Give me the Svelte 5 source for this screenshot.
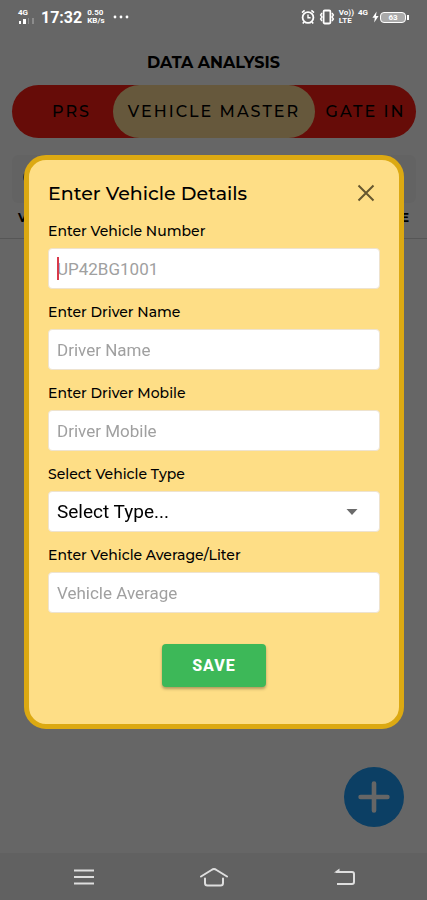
<script lang="ts">
  import { onMount } from 'svelte';

  let activeTab: string = 'VEHICLE MASTER';
  let open: boolean = true;
  let search: string = '';
  let numberInput: HTMLInputElement;

  let vehicle = {
    number: '',
    driver: '',
    mobile: '',
    type: '',
    average: '',
  };

  const tabs = [
    { name: 'PRS', kind: 'first' },
    { name: 'VEHICLE MASTER', kind: 'middle' },
    { name: 'GATE IN', kind: 'last' },
  ];

  onMount(() => {
    numberInput?.focus();
  });

  function save(event: Event): void {
    event.preventDefault();
    open = false;
  }
</script>

<div class="screen">
  <header class="status-bar">
    <div class="network">
      <span class="tiny">4G</span>
      <svg width="16" height="7" viewBox="0 0 16 7" fill="#fff" aria-hidden="true">
        <rect x="1" y="3" width="2" height="3" />
        <rect x="5" y="1" width="3" height="5" />
        <rect x="10" y="0" width="1" height="6" opacity="0.25" />
        <rect x="14" y="0" width="2" height="6" opacity="0.25" />
      </svg>
    </div>
    <span class="clock">17:32</span>
    <span class="tiny">0.50<br />KB/s</span>
    <svg class="more" width="16" height="4" viewBox="0 0 16 4" fill="#fff" aria-hidden="true">
      <circle cx="2" cy="2" r="1.4" />
      <circle cx="8" cy="2" r="1.4" />
      <circle cx="14" cy="2" r="1.4" />
    </svg>
    <div class="status-right">
      <svg width="14" height="16" viewBox="0 0 14 16" fill="none" stroke="#fff" aria-hidden="true">
        <circle cx="7" cy="8.5" r="5.4" stroke-width="1.8" />
        <path d="M7 5.5v3.2h2.6" stroke-width="1.4" />
        <path d="M1 3.6 3.6 1.4M13 3.6 10.4 1.4M3 13l-1.2 1.6M11 13l1.2 1.6" stroke-width="1.6" />
      </svg>
      <svg width="16" height="16" viewBox="0 0 16 16" fill="none" stroke="#fff" aria-hidden="true">
        <rect x="4.6" y="1.5" width="6.8" height="13" rx="1.2" stroke-width="1.8" />
        <path d="M3 4 1.6 6 3 8 1.6 10 3 12M13 4l1.4 2L13 8l1.4 2L13 12" stroke-width="1.4" />
      </svg>
      <span class="tiny">Vo))<br />LTE</span>
      <span class="tiny data">4G</span>
      <div class="power">
        <svg width="7" height="12" viewBox="0 0 7 12" fill="#fff" aria-hidden="true">
          <path d="M4.6 0.5 0.4 6.8h2.4L2.2 11.5 6.6 5H4z" />
        </svg>
        <span class="battery">63</span>
        <i class="battery-tip"></i>
      </div>
    </div>
  </header>

  <main>
    <h1>DATA ANALYSIS</h1>
    <nav class="tabs">
      {#each tabs as tab}
        <button
          type="button"
          class="tab {tab.kind}"
          class:active={activeTab === tab.name}
          on:click={() => (activeTab = tab.name)}
        >
          {tab.name}
        </button>
      {/each}
    </nav>
    <div class="search">
      <svg width="20" height="20" viewBox="0 0 20 20" fill="none" stroke="#777" stroke-width="2" aria-hidden="true">
        <circle cx="8" cy="8" r="6" />
        <path d="m13 13 5 5" />
      </svg>
      <input type="search" aria-label="Search" bind:value={search} />
    </div>
    <table>
      <thead>
        <tr>
          <th>V.No</th>
          <th>TYPE</th>
        </tr>
      </thead>
    </table>
    <button type="button" class="add" aria-label="Add vehicle" on:click={() => (open = true)}>
      <svg width="32" height="32" viewBox="0 0 32 32" stroke="#fff" stroke-width="4.6" stroke-linecap="round">
        <path d="M16 2.6v26.8M2.6 16h26.8" />
      </svg>
    </button>
  </main>

  {#if open}
    <div class="backdrop">
      <form class="dialog" on:submit={save}>
        <div class="dialog-head">
          <h2>Enter Vehicle Details</h2>
          <button type="button" class="close" aria-label="Close" on:click={() => (open = false)}>
            <svg width="18" height="18" viewBox="0 0 18 18" stroke="#66572f" stroke-width="2">
              <path d="m1.5 1.5 15 15m0-15-15 15" />
            </svg>
          </button>
        </div>

        <div class="field">
          <label for="number">Enter Vehicle Number</label>
          <input
            id="number"
            type="text"
            placeholder="UP42BG1001"
            bind:this={numberInput}
            bind:value={vehicle.number}
          />
          {#if !vehicle.number}
            <i class="caret"></i>
          {/if}
        </div>
        <div class="field">
          <label for="driver">Enter Driver Name</label>
          <input id="driver" type="text" placeholder="Driver Name" bind:value={vehicle.driver} />
        </div>
        <div class="field">
          <label for="mobile">Enter Driver Mobile</label>
          <input id="mobile" type="tel" placeholder="Driver Mobile" bind:value={vehicle.mobile} />
        </div>
        <div class="field">
          <label for="type">Select Vehicle Type</label>
          <select id="type" bind:value={vehicle.type}>
            <option value="">Select Type...</option>
          </select>
          <svg class="arrow" width="12" height="6" viewBox="0 0 12 6" fill="#6b6b6b" aria-hidden="true">
            <path d="M0.5 0h11L6 6z" />
          </svg>
        </div>
        <div class="field">
          <label for="average">Enter Vehicle Average/Liter</label>
          <input id="average" type="text" placeholder="Vehicle Average" bind:value={vehicle.average} />
        </div>

        <button type="submit" class="save">SAVE</button>
      </form>
    </div>
  {/if}

  <footer class="system-nav">
    <button type="button" aria-label="Recent apps">
      <svg width="20" height="18" viewBox="0 0 20 18" stroke="#dedede" stroke-width="2.2">
        <path d="M0 2.5h20M0 9h20M0 15.5h20" />
      </svg>
    </button>
    <button type="button" aria-label="Home">
      <svg width="28" height="20" viewBox="0 0 28 20" fill="none" stroke="#dedede" stroke-width="2" stroke-linecap="round" stroke-linejoin="round">
        <path d="M1 9.5 11.5 3Q14 1.2 16.5 3L27 9.5" />
        <path d="M5 11.5V16q0 2.5 2.5 2.5h13q2.5 0 2.5-2.5v-4.5" />
      </svg>
    </button>
    <button type="button" aria-label="Back">
      <svg width="22" height="18" viewBox="0 0 22 18" fill="none" stroke="#dedede" stroke-width="2">
        <path d="M2 4h16q2 0 2 2v8q0 2-2 2H3" />
        <path d="M0 4.6 5.5 0.5V5z" fill="#dedede" stroke="none" />
      </svg>
    </button>
  </footer>
</div>

<style>
  :global(body) {
    background: #fff;
  }

  .screen {
    position: relative;
    display: flex;
    flex-direction: column;
    min-height: 100vh;
    font-family: Montserrat, Inter, sans-serif;
    color: #000;
  }

  button,
  input,
  select {
    box-sizing: border-box;
    margin: 0;
    border: 0;
    padding: 0;
    font-family: inherit;
    color: inherit;
    background: none;
  }

  button {
    cursor: pointer;
  }

  svg {
    display: block;
    flex: none;
  }

  .status-bar {
    position: relative;
    z-index: 2;
    display: flex;
    align-items: center;
    gap: 5px;
    height: 34px;
    padding: 0 18px;
    font-family: Roboto, sans-serif;
    color: #fff;
  }

  .network {
    display: flex;
    flex-direction: column;
    gap: 1px;
    margin-right: 2px;
  }

  .tiny {
    font-size: 8px;
    font-weight: 700;
    line-height: 8px;
  }

  .clock {
    font-size: 16px;
    font-weight: 700;
  }

  .more {
    margin-left: 3px;
  }

  .status-right {
    display: flex;
    align-items: center;
    gap: 4px;
    margin-left: auto;
  }

  .data {
    align-self: flex-start;
  }

  .power {
    display: flex;
    align-items: center;
    gap: 1px;
  }

  .battery {
    width: 24px;
    border: 1px solid #fff;
    border-radius: 4px;
    background: #aaa;
    font-size: 8px;
    font-weight: 700;
    line-height: 9px;
    text-align: center;
  }

  .battery-tip {
    width: 2px;
    height: 5px;
    background: #fff;
  }

  main {
    flex: 1;
    display: flex;
    flex-direction: column;
  }

  h1 {
    margin: 17px 0 10px;
    font-size: 16px;
    font-weight: 700;
    line-height: 24px;
    text-align: center;
  }

  .tabs {
    display: grid;
    grid-template-columns: minmax(0, 1fr) minmax(0, 2fr) minmax(0, 1fr);
    height: 53px;
    margin: 0 11px 0 12px;
    border-radius: 27px;
    background: #ff1e14;
    overflow: hidden;
  }

  .tab {
    font-size: 16px;
    font-weight: 500;
    letter-spacing: 2px;
    white-space: nowrap;
  }

  .first {
    padding-left: 18px;
  }

  .active {
    border-radius: 27px;
    background: #ffdc96;
  }

  .search {
    display: flex;
    align-items: center;
    height: 48px;
    margin: 17px 11px 0 12px;
    padding: 0 10px;
    border-radius: 6px;
    background: #f7f7f7;
  }

  .search input {
    flex: 1;
    min-width: 0;
    height: 100%;
    outline: none;
  }

  table {
    width: 100%;
    border-collapse: collapse;
    border-bottom: 1px solid #d8d8d8;
  }

  th {
    padding: 6px 18px 11px;
    font-size: 12px;
    font-weight: 700;
    line-height: 18px;
    text-align: left;
  }

  th:last-child {
    text-align: right;
  }

  .add {
    display: grid;
    place-items: center;
    width: 60px;
    height: 60px;
    margin: auto 23px 26px auto;
    border-radius: 50%;
    background: #1e9ffa;
  }

  .backdrop {
    position: absolute;
    inset: 0;
    z-index: 1;
    display: flex;
    align-items: center;
    padding: 0 23px 16px 24px;
    background: rgba(0, 0, 0, 0.6);
  }

  .dialog {
    flex: 1;
    min-width: 0;
    display: flex;
    flex-direction: column;
    gap: 14px;
    padding: 18px 19px 37px;
    border: 5px solid #dca912;
    border-radius: 22px;
    background: #fede86;
  }

  .dialog-head {
    display: flex;
    align-items: center;
    justify-content: space-between;
    height: 30px;
  }

  h2 {
    margin: 0;
    font-size: 19px;
    font-weight: 500;
  }

  .close {
    padding: 5px;
  }

  .field {
    position: relative;
    display: flex;
    flex-direction: column;
    gap: 8px;
  }

  label {
    font-size: 14px;
    font-weight: 500;
    line-height: 18px;
  }

  .field input,
  .field select {
    width: 100%;
    height: 41px;
    padding: 0 8px;
    border: 1px solid #eee3cf;
    border-radius: 4px;
    background: #fff;
    font-family: Roboto, sans-serif;
    font-size: 17px;
    outline: none;
    caret-color: #d8394a;
  }

  .field input::placeholder {
    color: #a0a0a0;
    opacity: 1;
  }

  .field select {
    appearance: none;
    font-size: 19px;
  }

  .caret {
    position: absolute;
    bottom: 9px;
    left: 9px;
    width: 2px;
    height: 23px;
    background: #d8394a;
  }

  .arrow {
    position: absolute;
    right: 22px;
    bottom: 17px;
  }

  .save {
    align-self: center;
    width: 104px;
    height: 43px;
    margin-top: 17px;
    border-radius: 4px;
    background: #3db858;
    box-shadow: 0 2px 3px rgba(0, 0, 0, 0.3);
    font-family: Roboto, sans-serif;
    font-size: 16px;
    font-weight: 800;
    letter-spacing: 1px;
    color: #fff;
  }

  .system-nav {
    position: relative;
    z-index: 2;
    display: flex;
    justify-content: space-between;
    align-items: center;
    height: 47px;
    padding: 0 71px 0 74px;
    background: #616161;
  }
</style>
